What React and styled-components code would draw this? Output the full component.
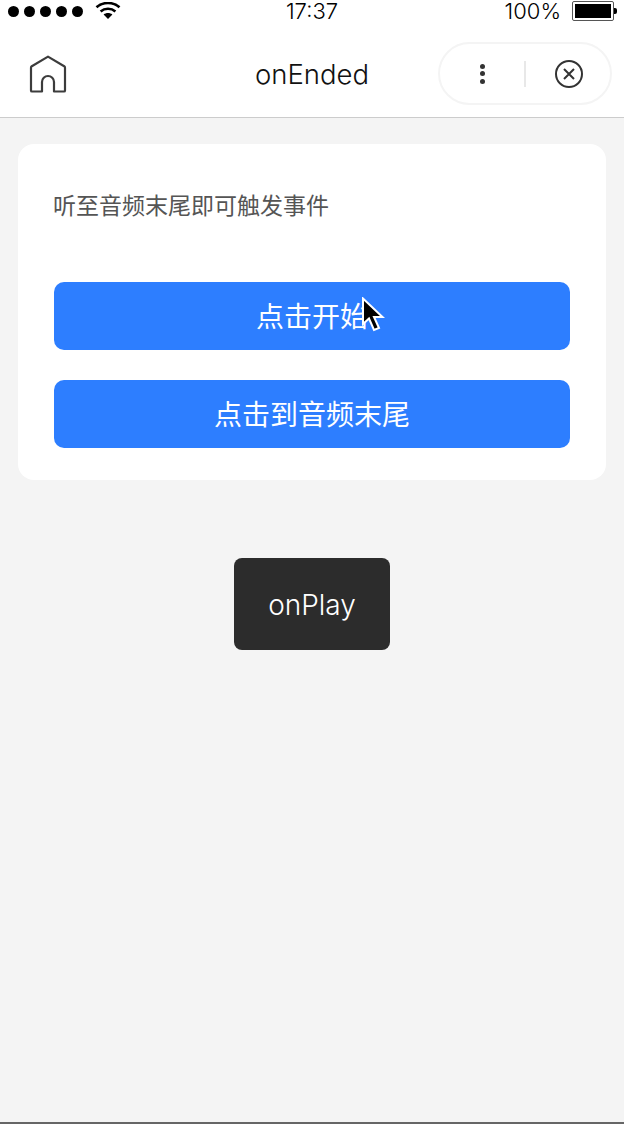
import React from "react";
import styled, { createGlobalStyle } from "styled-components";

const GlobalStyle = createGlobalStyle`
  html, body {
    margin: 0;
    padding: 0;
    background: #f4f4f4;
  }
  * {
    box-sizing: border-box;
  }
`;

function WifiIcon() {
  return (
    <svg width="26" height="18" viewBox="0 0 26 18" fill="none" stroke="#000" strokeWidth="2.6">
      <path d="M1.5 5.2C7.8 -0.4 18.2 -0.4 24.5 5.2" />
      <path d="M5.6 9.4C9.8 5.8 16.2 5.8 20.4 9.4" />
      <path d="M13 17L8.6 12.6C11.2 10.6 14.8 10.6 17.4 12.6Z" fill="#000" stroke="none" />
    </svg>
  );
}

function HomeIcon() {
  return (
    <svg width="38" height="38" viewBox="0 0 38 38" fill="none" stroke="#3c3c3c" strokeWidth="2.2" strokeLinejoin="round">
      <path d="M19 1.6L35.2 11.2Q36 11.8 36 12.8V35.4Q36 36.5 35 36.5H25V27A6 6 0 0 0 13 27V36.5H3Q2 36.5 2 35.4V12.8Q2 11.8 2.8 11.2Z" />
    </svg>
  );
}

function CloseIcon() {
  return (
    <svg width="28" height="28" viewBox="0 0 28 28" fill="none" stroke="#333" strokeWidth="2">
      <circle cx="14" cy="14" r="13" />
      <path d="M9 9L19 19M19 9L9 19" />
    </svg>
  );
}

function Pointer() {
  return (
    <svg width="24" height="36" viewBox="0 0 24 36">
      <path
        d="M2 1.5V27L8 21.5L13 33L18 31L13 20H21.5Z"
        fill="#000"
        stroke="#fff"
        strokeWidth="2"
      />
    </svg>
  );
}

function App() {
  return (
    <>
      <GlobalStyle />
      <Page>
        <StatusBar>
          <Signal>
            <Dots>
              <Dot />
              <Dot />
              <Dot />
              <Dot />
              <Dot />
            </Dots>
            <WifiIcon />
          </Signal>
          <Clock>17:37</Clock>
          <Power>
            100%
            <Battery>
              <BatteryFill />
            </Battery>
          </Power>
        </StatusBar>
        <NavBar>
          <HomeButton>
            <HomeIcon />
          </HomeButton>
          <NavTitle>onEnded</NavTitle>
          <Capsule>
            <MoreDots>
              <i />
              <i />
              <i />
            </MoreDots>
            <CapsuleDivider />
            <CloseIcon />
          </Capsule>
        </NavBar>
        <Content>
          <Card>
            <Hint>听至音频末尾即可触发事件</Hint>
            <ButtonGroup>
              <PrimaryButton>
                点击开始
                <PointerWrap>
                  <Pointer />
                </PointerWrap>
              </PrimaryButton>
              <PrimaryButton>点击到音频末尾</PrimaryButton>
            </ButtonGroup>
          </Card>
          <Toast>onPlay</Toast>
        </Content>
      </Page>
    </>
  );
}

export default App;

const Page = styled.div`
  width: 624px;
  height: 1124px;
  display: flex;
  flex-direction: column;
  overflow: hidden;
  background: #f4f4f4;
  border-bottom: 2px solid #666;
  font-family: Inter, "Noto Sans CJK SC", sans-serif;
`;

const StatusBar = styled.div`
  height: 22px;
  padding: 0 10px 0 8px;
  display: flex;
  align-items: center;
  justify-content: space-between;
  position: relative;
  background: #fff;
  color: #000;
  font-size: 22px;
  font-weight: 300;
  line-height: 22px;
`;

const Signal = styled.div`
  display: flex;
  align-items: center;
  gap: 12px;
`;

const Dots = styled.div`
  display: flex;
  gap: 5px;
`;

const Dot = styled.span`
  width: 11px;
  height: 11px;
  border-radius: 50%;
  background: #000;
`;

const Clock = styled.span`
  position: absolute;
  left: 0;
  right: 0;
  top: 0;
  text-align: center;
`;

const Power = styled.div`
  display: flex;
  align-items: center;
  gap: 11px;
`;

const Battery = styled.div`
  width: 42px;
  height: 20px;
  padding: 2px;
  border: 1px solid #555;
  border-radius: 2px;
  position: relative;

  &::after {
    content: "";
    position: absolute;
    right: -4px;
    top: 6px;
    width: 3px;
    height: 6px;
    background: #000;
    border-radius: 0 2px 2px 0;
  }
`;

const BatteryFill = styled.div`
  height: 100%;
  background: #000;
`;

const NavBar = styled.div`
  height: 96px;
  padding: 8px 12px 0 29px;
  display: flex;
  align-items: center;
  justify-content: space-between;
  position: relative;
  background: #fff;
  border-bottom: 1px solid #ccc;
`;

const HomeButton = styled.div`
  display: flex;
  align-items: center;
`;

const NavTitle = styled.div`
  position: absolute;
  left: 0;
  right: 0;
  top: 33px;
  text-align: center;
  font-size: 27.5px;
  font-weight: 300;
  color: #111;
  line-height: 38px;
`;

const Capsule = styled.div`
  width: 174px;
  height: 63px;
  padding-left: 40px;
  display: flex;
  align-items: center;
  border: 2px solid #f4f4f4;
  border-radius: 32px;

  svg {
    margin-left: 29px;
  }
`;

const MoreDots = styled.div`
  display: flex;
  flex-direction: column;
  gap: 2.5px;

  i {
    display: block;
    width: 5px;
    height: 5px;
    border-radius: 50%;
    background: #333;
  }
`;

const CapsuleDivider = styled.div`
  width: 2px;
  height: 26px;
  margin-left: 39px;
  background: #e8e8e8;
`;

const Content = styled.div`
  flex: 1;
  padding: 26px 18px 0;
  display: flex;
  flex-direction: column;
  align-items: center;
`;

const Card = styled.div`
  width: 100%;
  height: 336px;
  padding: 0 36px;
  background: #fff;
  border-radius: 16px;
`;

const Hint = styled.p`
  margin: 46px 0 0 -1px;
  font-size: 23px;
  line-height: 32px;
  color: #555;
`;

const ButtonGroup = styled.div`
  margin-top: 60px;
  display: flex;
  flex-direction: column;
  gap: 30px;
`;

const PrimaryButton = styled.div`
  height: 68px;
  padding-bottom: 2px;
  position: relative;
  display: flex;
  align-items: center;
  justify-content: center;
  background: #2d7eff;
  border-radius: 10px;
  color: #fff;
  font-size: 28px;
`;

const PointerWrap = styled.div`
  position: absolute;
  left: 307px;
  top: 15px;
  line-height: 0;
`;

const Toast = styled.div`
  margin-top: 78px;
  width: 156px;
  height: 92px;
  padding-top: 2px;
  display: flex;
  align-items: center;
  justify-content: center;
  background: #2c2c2c;
  border-radius: 8px;
  color: #fff;
  font-size: 28px;
  font-weight: 300;
`;
